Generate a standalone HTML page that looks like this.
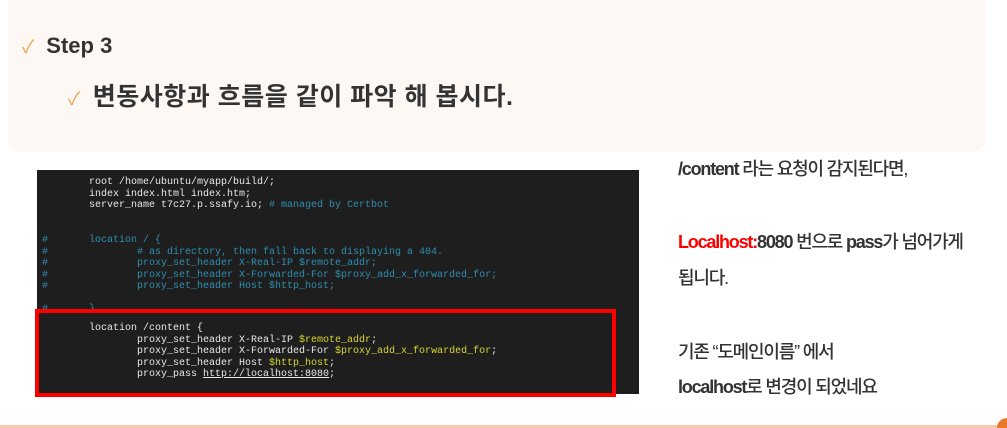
<!DOCTYPE html>
<html><head><meta charset="utf-8"><style>
body{margin:0;width:1007px;height:428px;background:#fff;position:relative;overflow:hidden;font-family:"Liberation Sans","Noto Sans CJK KR",sans-serif}
.panel{position:absolute;left:8px;top:0;width:978px;height:152px;background:#fdf8f4;border-radius:0 0 14px 14px}
.t1{position:absolute;left:22px;top:33px;font-size:22px;font-weight:bold;color:#333}
.t2{position:absolute;left:68px;top:77px;font-size:25px;font-weight:bold;color:#333;letter-spacing:0.5px}
.ck{color:#f0a050;font-weight:normal;font-size:18px;margin-right:12px}
.code{position:absolute;left:37px;top:170px;width:602px;height:224px;background:#1e1e1e}
pre{margin:0;position:absolute;font-family:"Liberation Mono",monospace;font-size:10px;line-height:11.5px;color:#e8e8e8}
.c{color:#2e8fb0}.y{color:#d6d630}
.red{position:absolute;left:35px;top:309px;width:573px;height:80px;border:4px solid #f00}
.r{position:absolute;left:678px;font-size:18px;color:#333;letter-spacing:-1.2px;font-weight:bold}
.r span.n{font-weight:500}
.line{position:absolute;left:0;right:0;top:425px;height:3px;background:#f6c9a8}
.corner{position:absolute;right:0;bottom:0;width:10px;height:10px;background:#e8782a;border-top-left-radius:10px}
</style></head><body>
<div class="panel"></div>
<div class="t1"><span class="ck">✓</span>Step 3</div>
<div class="t2"><span class="ck">✓</span>변동사항과 흐름을 같이 파악 해 봅시다.</div>
<div class="code">
<pre style="left:52px;top:7px">root /home/ubuntu/myapp/build/;
index index.html index.htm;
server_name t7c27.p.ssafy.io; <span class="c"># managed by Certbot</span></pre>
<pre class="c" style="left:5px;top:65px">#
#
#
#
#

#</pre>
<pre class="c" style="left:52px;top:65px">location / {
        # as directory, then fall back to displaying a 404.
        proxy_set_header X-Real-IP $remote_addr;
        proxy_set_header X-Forwarded-For $proxy_add_x_forwarded_for;
        proxy_set_header Host $http_host;

}</pre>
<pre style="left:52px;top:153px">location /content {
        proxy_set_header X-Real-IP <span class="y">$remote_addr</span>;
        proxy_set_header X-Forwarded-For <span class="y">$proxy_add_x_forwarded_for</span>;
        proxy_set_header Host <span class="y">$http_host</span>;
        proxy_pass <u>http://localhost:8080</u>;</pre>
</div>
<div class="red"></div>
<div class="r" style="top:155px">/content <span class="n">라는 요청이 감지된다면,</span></div>
<div class="r" style="top:228px"><span style="color:#f00">Localhost:</span>8080 <span class="n">번으로</span> pass<span class="n">가 넘어가게</span></div>
<div class="r" style="top:264px"><span class="n">됩니다.</span></div>
<div class="r" style="top:338px"><span class="n">기존 “도메인이름” 에서</span></div>
<div class="r" style="top:373px">localhost<span class="n">로 변경이 되었네요</span></div>
<div class="line"></div><div class="corner"></div>
</body></html>
